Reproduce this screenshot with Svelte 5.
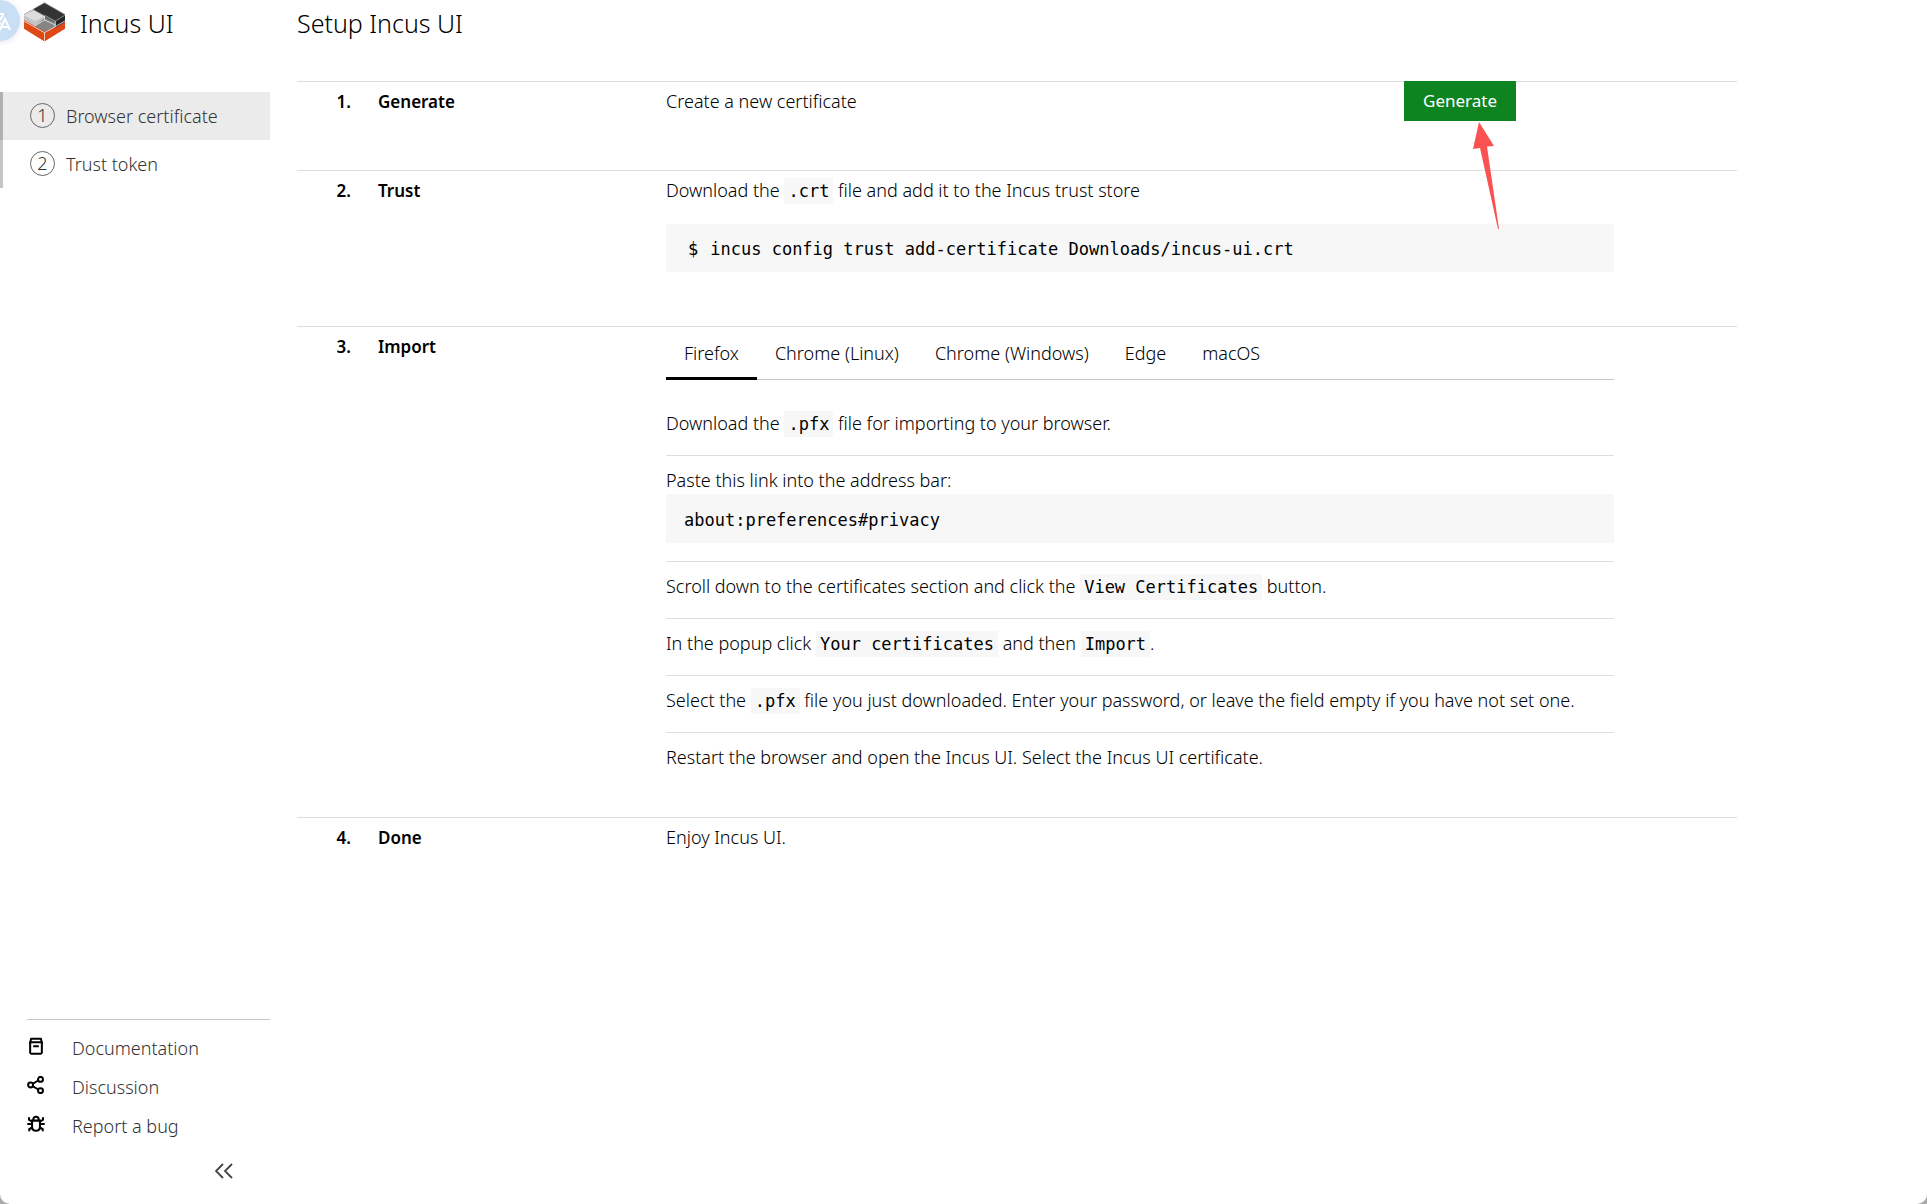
<script>
  const navItems = [
    { step: 1, label: 'Browser certificate', current: true },
    { step: 2, label: 'Trust token', current: false },
  ];
  const tabs = ['Firefox', 'Chrome (Linux)', 'Chrome (Windows)', 'Edge', 'macOS'];
  let activeTab = $state('Firefox');
</script>

<div class="app">
  <aside class="sidebar">
    <a class="brand" href="#home">
      <svg class="logo" viewBox="0 0 44 40" aria-hidden="true">
        <path d="M1 13v14l21 13 21-13V13L22 26z" fill="#dd4814" />
        <path d="M22 0 1 12v4l21 12 21-12v-4z" fill="#666" />
        <path d="M22 1 11 7l22 12 10-6z" fill="#333" />
        <path d="m33 19 10-6v7l-10 6z" fill="#262626" />
        <path d="m11 8 11 6v5l-10 5L1 18v-5z" fill="#c4c4c4" />
        <path d="m11 8 11 6-10 5-11-6z" fill="#dcdcdc" />
        <path d="m22 16 11 5v4l-11 5-10-6z" fill="#858585" />
        <path d="m1 19 21 12 21-12M22 31v9M22 14v4M1 13l10-6M12 24l10-6 11 5M33 19v6" fill="none" stroke="#f4eeee" stroke-width=".8" />
        <path d="m22 13 11 6 10-6" fill="none" stroke="#aaa" stroke-width=".7" />
      </svg>
      <span>Incus UI</span>
    </a>

    <nav class="steps" aria-label="Setup">
      {#each navItems as item}
        <a href="#step-{item.step}" class="step" class:current={item.current}>
          <span class="badge">{item.step}</span>
          <span>{item.label}</span>
        </a>
      {/each}
    </nav>

    <div class="links">
      <a href="#documentation">
        <svg viewBox="0 0 16 16" aria-hidden="true">
          <path d="M2.8 4.2v9.6q0 1 1 1h8.4q1 0 1-1V4.2M2.8 4.6l.9-3.1h8.6l.9 3.1zM5.5 8.2h5" />
        </svg>
        <span>Documentation</span>
      </a>
      <a href="#discussion">
        <svg viewBox="0 0 16 16" aria-hidden="true">
          <circle cx="3.2" cy="8" r="2.2" /><circle cx="12" cy="3" r="2.2" /><circle cx="12" cy="13" r="2.2" />
          <path d="m5 7 5-3M5 9l5 3" />
        </svg>
        <span>Discussion</span>
      </a>
      <a href="#bug">
        <svg viewBox="0 0 16 16" aria-hidden="true">
          <path d="M4.5 5h7v5.5q0 3.5-3.5 3.5t-3.5-3.5zM5.5 4.5Q5.5 1.5 8 1.5t2.5 3M.3 8h4.2M11.5 8h4.2M1.8 2v2.2L4.5 6M14.2 2v2.2L11.5 6M2 14.5v-2l2.7-1.5M14 14.5v-2L11.3 11" />
        </svg>
        <span>Report a bug</span>
      </a>
    </div>
    <button class="collapse" aria-label="Collapse navigation">
      <svg viewBox="0 0 18 16" aria-hidden="true"><path d="M8 1 1 8l7 7M17 1l-7 7 7 7" /></svg>
    </button>
  </aside>

  <main>
    <h1>Setup Incus UI</h1>

    <section class="row">
      <h2><span class="num">1.</span>Generate</h2>
      <p class="text">Create a new certificate</p>
      <div class="action">
        <button class="generate">Generate</button>
        <svg class="arrow" viewBox="0 0 26 108" aria-hidden="true">
          <path d="M6 0 21 24l-7 .5L26 107h-1L7 26l-7 1z" />
        </svg>
      </div>
    </section>

    <section class="row">
      <h2><span class="num">2.</span>Trust</h2>
      <div class="body">
        <p>Download the <code>.crt</code> file and add it to the Incus trust store</p>
        <pre class="command"><span class="prompt">$</span>incus config trust add-certificate Downloads/incus-ui.crt</pre>
      </div>
    </section>

    <section class="row">
      <h2><span class="num">3.</span>Import</h2>
      <div class="body flush">
        <div class="tabs" role="tablist">
          {#each tabs as tab}
            <button role="tab" aria-selected={activeTab === tab} onclick={() => (activeTab = tab)}>{tab}</button>
          {/each}
        </div>
        <ul class="instructions">
          <li>Download the <code>.pfx</code> file for importing to your browser.</li>
          <li>
            Paste this link into the address bar:
            <pre class="link">about:preferences#privacy</pre>
          </li>
          <li>Scroll down to the certificates section and click the <code>View Certificates</code> button.</li>
          <li>In the popup click <code>Your certificates</code> and then <code>Import</code>.</li>
          <li>Select the <code>.pfx</code> file you just downloaded. Enter your password, or leave the field empty if you have not set one.</li>
          <li>Restart the browser and open the Incus UI. Select the Incus UI certificate.</li>
        </ul>
      </div>
    </section>

    <section class="row">
      <h2><span class="num">4.</span>Done</h2>
      <p class="text">Enjoy Incus UI.</p>
    </section>
  </main>

  <button class="translate" aria-label="Translate">
    <svg viewBox="0 0 41 41" aria-hidden="true">
      <path d="M12 14h13M19 11v3M24 15q-3 7-10 10M16 17q2 5 6 7M21 30l5-11 5 11M23 27h6" />
    </svg>
  </button>
</div>

<style>
  :global(body) {
    background: #aaa;
  }
  .app {
    position: relative;
    display: grid;
    grid-template-columns: 270px minmax(0, 1fr);
    min-height: 100vh;
    overflow: hidden;
    border-radius: 0 0 10px 10px;
    background: #fff;
    font-family: 'Noto Sans', 'Open Sans', sans-serif;
    font-size: 18px;
    font-weight: 300;
    line-height: 27px;
    color: #000;
  }
  .sidebar {
    display: flex;
    flex-direction: column;
  }
  a {
    color: inherit;
    text-decoration: none;
  }
  button {
    border: 0;
    background: none;
    font: inherit;
    color: inherit;
    cursor: pointer;
  }
  h1,
  h2,
  p,
  ul,
  pre {
    margin: 0;
    padding: 0;
  }
  .brand {
    display: flex;
    align-items: center;
    gap: 14px;
    height: 46px;
    margin-bottom: 46px;
    padding-left: 23px;
    font-size: 25px;
  }
  .logo {
    width: 43px;
    height: 40px;
    margin-bottom: 3px;
  }
  .step {
    display: flex;
    align-items: center;
    gap: 11px;
    height: 48px;
    padding-left: 27px;
    border-left: 3px solid #c6c6c6;
    box-sizing: border-box;
    color: #333;
  }
  .current {
    background: #ebebeb;
    border-color: #b0b0b0;
  }
  .badge {
    width: 23px;
    height: 23px;
    border: 1px solid #666;
    border-radius: 50%;
    line-height: 23px;
    text-align: center;
    margin-bottom: 2px;
  }
  .links {
    display: grid;
    gap: 12px;
    margin: auto 0 0 27px;
    padding-top: 15px;
    border-top: 1px solid #c6c6c6;
    color: #333;
  }
  .links a {
    display: flex;
    align-items: center;
    gap: 27px;
  }
  .links svg {
    width: 18px;
    height: 18px;
    margin-bottom: 5px;
    fill: none;
    stroke: #000;
    stroke-width: 1.8;
  }
  .collapse {
    align-self: flex-end;
    display: flex;
    margin: 23px 37px 25px 0;
    padding: 0;
  }
  .collapse svg {
    width: 18px;
    height: 16px;
    fill: none;
    stroke: #444;
    stroke-width: 1.8;
  }
  main {
    width: 100%;
    max-width: 1440px;
    margin-left: 27px;
  }
  h1 {
    margin-bottom: 35px;
    font-size: 25px;
    line-height: 46px;
    font-weight: 300;
  }
  .row {
    display: grid;
    grid-template-columns: repeat(12, minmax(0, 1fr));
    column-gap: 36px;
    padding-bottom: 54px;
    border-top: 1px solid #dedede;
  }
  h2 {
    grid-column: span 3;
    display: flex;
    gap: 27px;
    padding: 6px 0 1px;
    font-size: 17px;
    font-weight: 600;
    line-height: 27px;
  }
  .num {
    width: 54px;
    text-align: right;
  }
  .text {
    grid-column: span 6;
    padding-top: 6px;
  }
  .body {
    grid-column: span 8;
    padding-top: 6px;
  }
  .flush {
    padding-top: 0;
    margin-bottom: -26px;
  }
  .action {
    position: relative;
    grid-column: span 3;
    height: 35px;
    margin-top: -1px;
    margin-bottom: -1px;
  }
  .generate {
    height: 40px;
    padding: 0 19px 2px;
    background: #0e8420;
    color: #fff;
    font-size: 17px;
    font-weight: 400;
  }
  .arrow {
    position: absolute;
    left: 69px;
    top: 41px;
    width: 26px;
    height: 108px;
    fill: #fa5252;
  }
  code,
  pre {
    font-family: 'DejaVu Sans Mono', 'Liberation Mono', monospace;
    font-size: 17px;
    font-weight: 400;
    line-height: 20px;
    background: #f7f7f7;
  }
  code {
    padding: 3px 4px;
  }
  pre {
    padding: 15px 18px 13px;
  }
  .command {
    margin-top: 20px;
    padding-left: 22px;
  }
  .link {
    padding-top: 16px;
  }
  .prompt {
    margin-right: 12px;
  }
  .tabs {
    display: flex;
    box-shadow: inset 0 -1px #c6c6c6;
  }
  .tabs button {
    padding: 13px 18px;
    line-height: 27px;
  }
  .tabs [aria-selected='true'] {
    box-shadow: inset 0 -3px #000;
  }
  .instructions {
    padding-top: 19px;
    list-style: none;
  }
  li {
    padding: 11px 0 18px;
  }
  li + li {
    border-top: 1px solid #dedede;
  }
  .translate {
    position: absolute;
    left: -21px;
    top: 0;
    width: 41px;
    height: 41px;
    padding: 0;
    border-radius: 50%;
    background: #c9dff5;
    box-shadow: 0 1px 6px #e4e4ee;
  }
  .translate svg {
    display: block;
    fill: none;
    stroke: #fff;
    stroke-width: 2;
  }
</style>
